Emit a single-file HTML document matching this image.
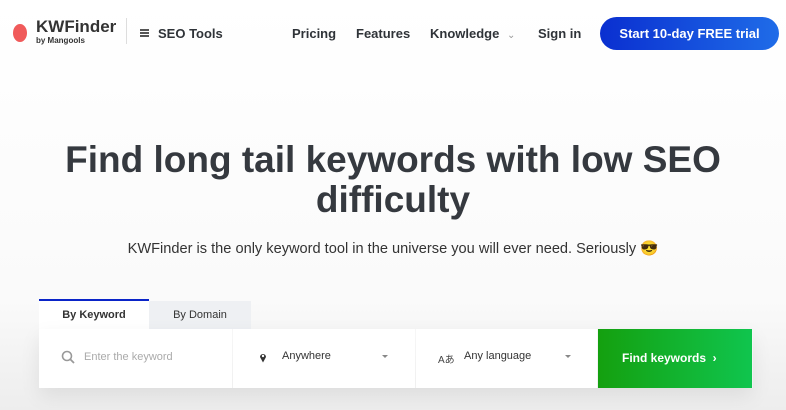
<!DOCTYPE html>
<html><head><meta charset="utf-8"><style>
*{margin:0;padding:0;box-sizing:border-box}
body{width:786px;height:410px;overflow:hidden;font-family:"Liberation Sans",sans-serif;background:linear-gradient(#fff 0,#fafafa 300px,#ededed 410px);color:#333840;position:relative}
.a{position:absolute;white-space:nowrap}
.nav{font-size:13px;font-weight:bold;color:#2f3338}
</style></head><body>
<div class="a" style="left:13px;top:24px;width:14px;height:18px;border-radius:50%;background:#f05a5a"></div>
<div class="a" style="left:36px;top:17px;font-size:17px;font-weight:bold;color:#333">KWFinder</div>
<div class="a" style="left:36px;top:36px;font-size:8px;font-weight:bold;color:#333">by Mangools</div>
<div class="a" style="left:126px;top:18px;width:1px;height:26px;background:#ddd"></div>
<div class="a" style="left:140px;top:29px;width:9px;height:1.5px;background:#555;box-shadow:0 3px 0 #555,0 6px 0 #555"></div>
<div class="a nav" style="left:158px;top:26px">SEO Tools</div>
<div class="a nav" style="left:292px;top:26px">Pricing</div>
<div class="a nav" style="left:356px;top:26px">Features</div>
<div class="a nav" style="left:430px;top:26px">Knowledge <span style="color:#999;font-weight:normal;font-size:10px;margin-left:4px">⌄</span></div>
<div class="a nav" style="left:538px;top:26px">Sign in</div>
<div class="a" style="left:600px;top:17px;width:179px;height:33px;border-radius:17px;background:linear-gradient(90deg,#0a2fd0,#1f6ce8);color:#fff;font-size:13px;font-weight:bold;text-align:center;line-height:33px">Start 10-day FREE trial</div>
<div class="a" style="left:0;width:786px;top:140px;text-align:center;font-size:37px;font-weight:bold;line-height:40px;color:#35393f">Find long tail keywords with low SEO<br>difficulty</div>
<div class="a" style="left:0;width:786px;top:239px;text-align:center;font-size:14.6px;color:#333">KWFinder is the only keyword tool in the universe you will ever need. Seriously 😎</div>
<div class="a" style="left:39px;top:299px;width:110px;height:30px;background:#fff;border-top:2px solid #0a24c8;font-size:11px;font-weight:bold;text-align:center;line-height:28px;color:#333">By Keyword</div>
<div class="a" style="left:149px;top:301px;width:102px;height:28px;background:#eef0f3;font-size:11px;text-align:center;line-height:28px;color:#333">By Domain</div>
<div class="a" style="left:39px;top:329px;width:714px;height:59px;box-shadow:0 8px 20px rgba(0,0,0,.08)"></div>
<div class="a" style="left:39px;top:329px;width:193px;height:59px;background:#fff"></div>
<div class="a" style="left:233px;top:329px;width:182px;height:59px;background:#fff"></div>
<div class="a" style="left:416px;top:329px;width:181px;height:59px;background:#fff"></div>
<svg class="a" style="left:61px;top:350px" width="14" height="14"><circle cx="6" cy="6" r="4.5" fill="none" stroke="#999" stroke-width="1.6"/><path d="M9.5 9.5L13 13" stroke="#999" stroke-width="1.8"/></svg>
<div class="a" style="left:84px;top:351px;font-size:11px;color:#aaa">Enter the keyword</div>
<svg class="a" style="left:259px;top:352px" width="8" height="11"><path d="M4 10.5L1 5A3 3 0 1 1 7 5Z" fill="#333"/><circle cx="4" cy="4" r="1.2" fill="#fff"/></svg>
<div class="a" style="left:282px;top:350px;font-size:11px;color:#333">Anywhere</div>
<div class="a" style="left:382px;top:355px;border:3px solid transparent;border-top:3px solid #888"></div>
<div class="a" style="left:438px;top:351px;font-size:10px;color:#444;font-family:'Liberation Sans','Noto Sans CJK JP',sans-serif">Aあ</div>
<div class="a" style="left:464px;top:350px;font-size:11px;color:#333">Any language</div>
<div class="a" style="left:565px;top:355px;border:3px solid transparent;border-top:3px solid #888"></div>
<div class="a" style="left:598px;top:329px;width:154px;height:59px;background:linear-gradient(90deg,#14a00f,#10c54e);color:#fff;font-size:12px;font-weight:bold;line-height:59px;padding-left:24px">Find keywords &nbsp;›</div>
</body></html>
